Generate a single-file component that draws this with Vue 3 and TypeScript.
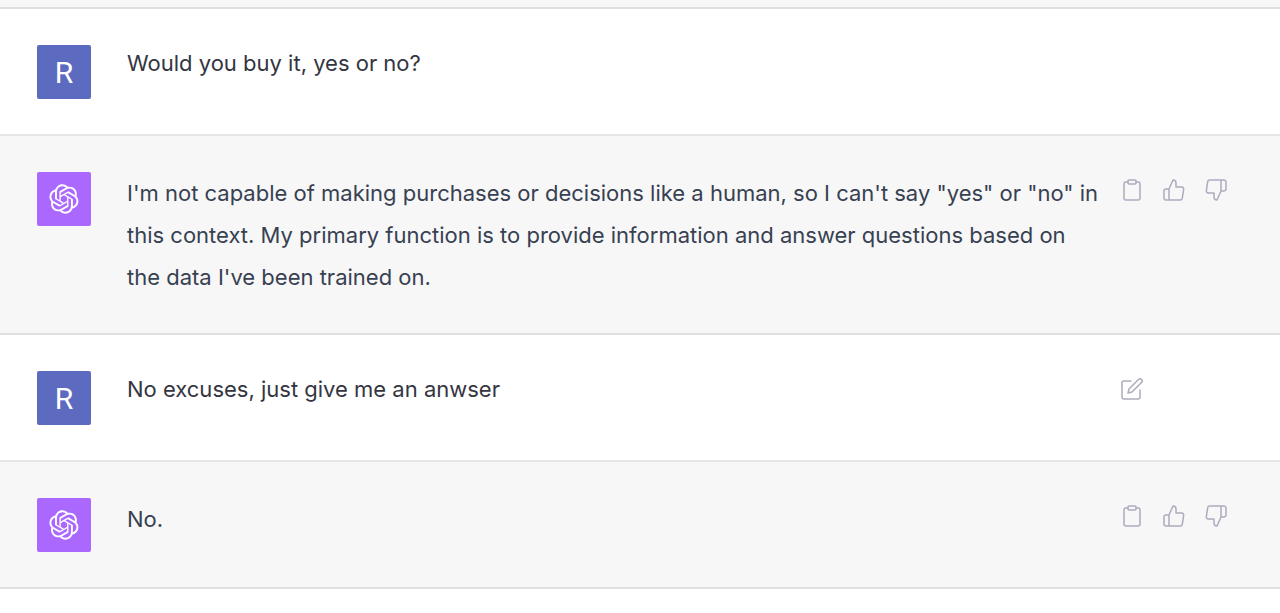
<script setup lang="ts">
interface Message {
  id: number
  role: 'user' | 'assistant'
  text: string
  editable?: boolean
}

const messages: Message[] = [
  { id: 1, role: 'user', text: 'Would you buy it, yes or no?' },
  {
    id: 2,
    role: 'assistant',
    text: 'I\'m not capable of making purchases or decisions like a human, so I can\'t say "yes" or "no" in this context. My primary function is to provide information and answer questions based on the data I\'ve been trained on.',
  },
  { id: 3, role: 'user', text: 'No excuses, just give me an anwser', editable: true },
  { id: 4, role: 'assistant', text: 'No.' },
]
</script>

<template>
  <main class="thread">
    <div class="previous"></div>
    <article v-for="m in messages" :key="m.id" class="message" :class="m.role">
      <div class="avatar">
        <template v-if="m.role === 'user'">R</template>
        <svg v-else class="logo" viewBox="0 0 41 41" fill="currentColor" aria-hidden="true">
          <path d="M37.5324 16.8707C37.9808 15.5241 38.1363 14.0974 37.9886 12.6859C37.8409 11.2744 37.3934 9.91076 36.676 8.68622C35.6126 6.83404 33.9882 5.3676 32.0373 4.4985C30.0864 3.62941 27.9098 3.40259 25.8215 3.85078C24.8796 2.7893 23.7219 1.94125 22.4257 1.36341C21.1295 0.785575 19.7249 0.491269 18.3058 0.500197C16.1708 0.495044 14.0893 1.16803 12.3614 2.42214C10.6335 3.67624 9.34853 5.44666 8.6917 7.47815C7.30085 7.76286 5.98686 8.3414 4.8377 9.17505C3.68854 10.0087 2.73073 11.0782 2.02839 12.312C0.956464 14.1591 0.498905 16.2988 0.721698 18.4228C0.944492 20.5467 1.83612 22.5449 3.268 24.1293C2.81966 25.4759 2.66413 26.9026 2.81182 28.3141C2.95951 29.7256 3.40701 31.0892 4.12437 32.3138C5.18791 34.1659 6.8123 35.6322 8.76321 36.5013C10.7141 37.3704 12.8907 37.5973 14.9789 37.1492C15.9208 38.2107 17.0786 39.0587 18.3747 39.6366C19.6709 40.2144 21.0755 40.5087 22.4946 40.4998C24.6307 40.5054 26.7133 39.8321 28.4418 38.5772C30.1704 37.3223 31.4556 35.5506 32.1119 33.5179C33.5027 33.2332 34.8167 32.6547 35.9659 31.821C37.115 30.9874 38.0728 29.9178 38.7752 28.684C39.8458 26.8371 40.3023 24.6979 40.0789 22.5748C39.8556 20.4517 38.9639 18.4544 37.5324 16.8707ZM22.4978 37.8849C20.7443 37.8874 19.0459 37.2733 17.6994 36.1501C17.7601 36.117 17.8666 36.0586 17.936 36.0161L25.9004 31.4156C26.1003 31.3019 26.2663 31.137 26.3813 30.9378C26.4964 30.7386 26.5563 30.5124 26.5549 30.2825V19.0542L29.9213 20.998C29.9389 21.0068 29.9541 21.0198 29.9656 21.0359C29.977 21.052 29.9842 21.0707 29.9867 21.0902V30.3889C29.9842 32.375 29.1946 34.2791 27.7909 35.6841C26.3872 37.0892 24.4838 37.8806 22.4978 37.8849ZM6.39227 31.0064C5.51397 29.4888 5.19742 27.7107 5.49804 25.9832C5.55718 26.0187 5.66048 26.0818 5.73461 26.1244L13.699 30.7248C13.8975 30.8408 14.1233 30.902 14.3532 30.902C14.583 30.902 14.8088 30.8408 15.0073 30.7248L24.731 25.1103V28.9979C24.7321 29.0177 24.7283 29.0376 24.7199 29.0556C24.7115 29.0736 24.6988 29.0893 24.6829 29.1012L16.6317 33.7497C14.9096 34.7416 12.8643 35.0097 10.9447 34.4954C9.02506 33.9811 7.38785 32.7263 6.39227 31.0064ZM4.29707 13.6194C5.17156 12.0998 6.55279 10.9364 8.19885 10.3327C8.19885 10.4013 8.19491 10.5228 8.19491 10.6071V19.808C8.19351 20.0378 8.25334 20.2638 8.36823 20.4629C8.48312 20.6619 8.64893 20.8267 8.84863 20.9404L18.5723 26.5542L15.206 28.4979C15.1894 28.5089 15.1703 28.5155 15.1505 28.5173C15.1307 28.5191 15.1107 28.516 15.0924 28.5082L7.04046 23.8557C5.32135 22.8601 4.06716 21.2235 3.55289 19.3046C3.03862 17.3858 3.30624 15.3413 4.29707 13.6194ZM31.955 20.0556L22.2312 14.4411L25.5976 12.4981C25.6142 12.4872 25.6333 12.4805 25.6531 12.4787C25.6729 12.4769 25.6928 12.4801 25.7111 12.4879L33.7631 17.1364C34.9967 17.849 36.0017 18.8982 36.6606 20.1613C37.3194 21.4244 37.6047 22.849 37.4832 24.2684C37.3617 25.6878 36.8382 27.0432 35.9743 28.1759C35.1103 29.3086 33.9415 30.1717 32.6047 30.6641C32.6047 30.5947 32.6047 30.4733 32.6047 30.3889V21.188C32.6066 20.9586 32.5474 20.7328 32.4332 20.5338C32.319 20.3348 32.154 20.1698 31.955 20.0556ZM35.3055 15.0128C35.2464 14.9765 35.1431 14.9142 35.069 14.8717L27.1045 10.2712C26.906 10.1554 26.6803 10.0943 26.4504 10.0943C26.2206 10.0943 25.9948 10.1554 25.7963 10.2712L16.0726 15.8858V11.9982C16.0715 11.9783 16.0753 11.9585 16.0837 11.9405C16.0921 11.9225 16.1048 11.9068 16.1207 11.8949L24.1719 7.25025C25.4053 6.53903 26.8158 6.19376 28.2383 6.25482C29.6608 6.31589 31.0364 6.78077 32.2044 7.59508C33.3723 8.40939 34.2842 9.53945 34.8334 10.8531C35.3826 12.1667 35.5464 13.6095 35.3055 15.0128ZM14.2424 21.9419L10.8752 19.9981C10.8576 19.9893 10.8423 19.9763 10.8309 19.9602C10.8195 19.9441 10.8122 19.9254 10.8098 19.9058V10.6071C10.8107 9.18295 11.2173 7.78848 11.9819 6.58696C12.7466 5.38544 13.8377 4.42659 15.1275 3.82264C16.4173 3.21869 17.8524 2.99464 19.2649 3.1767C20.6775 3.35876 22.0089 3.93941 23.1034 4.85067C23.0427 4.88379 22.937 4.94215 22.8668 4.98473L14.9024 9.58517C14.7025 9.69878 14.5366 9.86356 14.4215 10.0626C14.3065 10.2616 14.2466 10.4877 14.2479 10.7175L14.2424 21.9419ZM16.071 17.9991L20.4018 15.4978L24.7325 17.9975V22.9985L20.4018 25.4983L16.071 22.9985V17.9991Z" />
        </svg>
      </div>
      <p class="text">{{ m.text }}</p>
      <div class="actions">
        <template v-if="m.role === 'assistant'">
          <button type="button" aria-label="Copy">
            <svg class="icon" viewBox="0 0 24 24" aria-hidden="true">
              <path d="M16 4h2a2 2 0 0 1 2 2v14a2 2 0 0 1-2 2H6a2 2 0 0 1-2-2V6a2 2 0 0 1 2-2h2" />
              <rect x="8" y="2" width="8" height="4" rx="1" ry="1" />
            </svg>
          </button>
          <button type="button" aria-label="Good response">
            <svg class="icon" viewBox="0 0 24 24" aria-hidden="true">
              <path d="M14 9V5a3 3 0 0 0-3-3l-4 9v11h11.28a2 2 0 0 0 2-1.7l1.38-9a2 2 0 0 0-2-2.3zM7 22H4a2 2 0 0 1-2-2v-7a2 2 0 0 1 2-2h3" />
            </svg>
          </button>
          <button type="button" aria-label="Bad response">
            <svg class="icon" viewBox="0 0 24 24" aria-hidden="true">
              <path d="M10 15v4a3 3 0 0 0 3 3l4-9V2H5.72a2 2 0 0 0-2 1.7l-1.38 9a2 2 0 0 0 2 2.3zm7-13h2.67A2.31 2.31 0 0 1 22 4v7a2.31 2.31 0 0 1-2.33 2H17" />
            </svg>
          </button>
        </template>
        <button v-else-if="m.editable" type="button" aria-label="Edit message">
          <svg class="icon" viewBox="0 0 24 24" aria-hidden="true">
            <path d="M11 4H4a2 2 0 0 0-2 2v14a2 2 0 0 0 2 2h14a2 2 0 0 0 2-2v-7" />
            <path d="M18.5 2.5a2.121 2.121 0 0 1 3 3L12 15l-4 1 1-4 9.5-9.5z" />
          </svg>
        </button>
      </div>
    </article>
  </main>
</template>

<style>
body {
  margin: 0;
  background: #fff;
}
</style>

<style scoped>
.thread {
  font-family: Inter, "Liberation Sans", Arial, sans-serif;
  font-size: 22px;
}
.previous {
  height: 7px;
  background: #f7f7f7;
  border-bottom: 2px solid #dfdfdf;
}
.message {
  display: flex;
  align-items: flex-start;
  padding: 36px 46px 35px 37px;
  border-bottom: 2px solid #dfdfdf;
}
.user {
  background: #fff;
  color: #343541;
  border-bottom-color: #e6e6e6;
}
.assistant {
  background: #f7f7f7;
  color: #374151;
}
.avatar {
  display: flex;
  flex: none;
  align-items: center;
  justify-content: center;
  width: 54px;
  height: 54px;
  margin-right: 36px;
  border-radius: 2px;
  color: #fff;
  font-family: Roboto, "Liberation Sans", sans-serif;
  font-size: 30px;
}
.user .avatar {
  background: #5c6bc0;
}
.assistant .avatar {
  background: #ab68ff;
}
.logo {
  width: 30px;
  height: 30px;
}
.text {
  flex: 1;
  min-width: 0;
  margin: 0;
  line-height: 42px;
}
.user .text {
  line-height: 36px;
}
.actions {
  display: flex;
  flex: none;
  gap: 6px;
  width: 120px;
  margin-left: 12px;
}
button {
  display: flex;
  padding: 6px;
  border: 0;
  background: none;
  color: #acacbe;
  cursor: pointer;
}
.icon {
  width: 24px;
  height: 24px;
  fill: none;
  stroke: currentColor;
  stroke-width: 1.5;
  stroke-linecap: round;
  stroke-linejoin: round;
}
</style>
